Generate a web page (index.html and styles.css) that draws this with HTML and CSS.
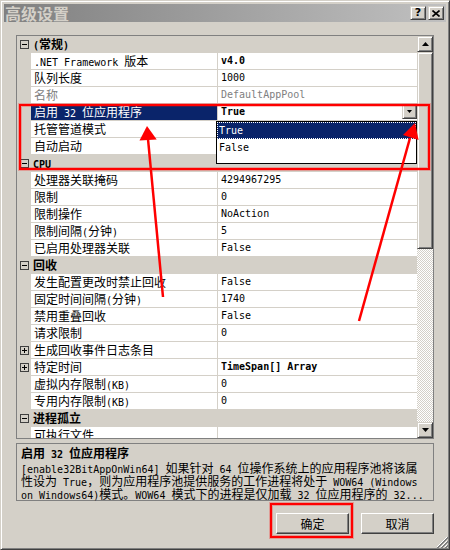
FILE: index.html
```html
<!DOCTYPE html>
<html lang="zh-CN">
  <head>
    <meta charset="UTF-8" />
    <title>高级设置</title>
    <link rel="stylesheet" href="styles.css">
  </head>
  <body>
    <div class="window">
      <div class="titlebar">
        <span class="title">高级设置</span>
        <div class="caption-btns">
          <span class="cbtn help">?</span>
          <span class="cbtn">
            <svg width="8" height="7" viewBox="0 0 8 7"><path d="M0.5 0.5 L7.5 6.5 M7.5 0.5 L0.5 6.5" stroke="#000" stroke-width="1.6" fill="none"/></svg>
          </span>
        </div>
      </div>

      <div class="content">
        <div class="grid">
          <div class="rows">
            <div class="cat"><span class="gutter"><i class="tog"></i></span><span class="label"><span class="m">(</span>常规<span class="m">)</span></span></div>
            <div class="row"><span class="gutter"></span><span class="name"><span class="m">.NET Framework </span>版本</span><span class="val b">v4.0</span></div>
            <div class="row"><span class="gutter"></span><span class="name">队列长度</span><span class="val">1000</span></div>
            <div class="row off"><span class="gutter"></span><span class="name">名称</span><span class="val">DefaultAppPool</span></div>
            <div class="row sel"><span class="gutter"></span><span class="name">启用<span class="m"> 32 </span>位应用程序</span><span class="val b edit">True<span class="ddbtn"><svg width="5" height="3" viewBox="0 0 5 3"><path d="M0 0 H5 L2.5 3 Z" fill="#000"/></svg></span></span></div>
            <div class="row"><span class="gutter"></span><span class="name">托管管道模式</span><span class="val"></span></div>
            <div class="row"><span class="gutter"></span><span class="name">自动启动</span><span class="val"></span></div>
            <div class="cat"><span class="gutter"><i class="tog"></i></span><span class="label"><span class="m">CPU</span></span></div>
            <div class="row"><span class="gutter"></span><span class="name">处理器关联掩码</span><span class="val">4294967295</span></div>
            <div class="row"><span class="gutter"></span><span class="name">限制</span><span class="val">0</span></div>
            <div class="row"><span class="gutter"></span><span class="name">限制操作</span><span class="val">NoAction</span></div>
            <div class="row"><span class="gutter"></span><span class="name">限制间隔<span class="m">(</span>分钟<span class="m">)</span></span><span class="val">5</span></div>
            <div class="row"><span class="gutter"></span><span class="name">已启用处理器关联</span><span class="val">False</span></div>
            <div class="cat"><span class="gutter"><i class="tog"></i></span><span class="label">回收</span></div>
            <div class="row"><span class="gutter"></span><span class="name">发生配置更改时禁止回收</span><span class="val">False</span></div>
            <div class="row"><span class="gutter"></span><span class="name">固定时间间隔<span class="m">(</span>分钟<span class="m">)</span></span><span class="val">1740</span></div>
            <div class="row"><span class="gutter"></span><span class="name">禁用重叠回收</span><span class="val">False</span></div>
            <div class="row"><span class="gutter"></span><span class="name">请求限制</span><span class="val">0</span></div>
            <div class="row"><span class="gutter"><i class="tog plus"></i></span><span class="name">生成回收事件日志条目</span><span class="val"></span></div>
            <div class="row"><span class="gutter"><i class="tog plus"></i></span><span class="name">特定时间</span><span class="val b">TimeSpan[] Array</span></div>
            <div class="row"><span class="gutter"></span><span class="name">虚拟内存限制<span class="m">(KB)</span></span><span class="val">0</span></div>
            <div class="row"><span class="gutter"></span><span class="name">专用内存限制<span class="m">(KB)</span></span><span class="val">0</span></div>
            <div class="cat"><span class="gutter"><i class="tog"></i></span><span class="label">进程孤立</span></div>
            <div class="row"><span class="gutter"></span><span class="name">可执行文件</span><span class="val"></span></div>
          </div>

          <div class="scrollbar">
            <span class="sb-btn"><svg width="7" height="4" viewBox="0 0 7 4"><path d="M0 4 H7 L3.5 0 Z" fill="#000"/></svg></span>
            <span class="thumb"></span>
            <span class="track"></span>
            <span class="sb-btn"><svg width="7" height="4" viewBox="0 0 7 4"><path d="M0 0 H7 L3.5 4 Z" fill="#000"/></svg></span>
          </div>

          <div class="dropdown">
            <div class="hi">True</div>
            <div>False</div>
          </div>
        </div>

        <div class="desc">
          <h4>启用<span class="m"> 32 </span>位应用程序</h4>
          <p><span class="m">[enable32BitAppOnWin64] </span>如果针对<span class="m"> 64 </span>位操作系统上的应用程序池将该属</p>
          <p>性设为<span class="m"> True</span>，则为应用程序池提供服务的工作进程将处于<span class="m"> WOW64 (Windows</span></p>
          <p><span class="m">on Windows64)</span>模式。<span class="m">WOW64 </span>模式下的进程是仅加载<span class="m"> 32 </span>位应用程序的<span class="m"> 32...</span></p>
        </div>

        <div class="actions">
          <button class="btn">确定</button>
          <button class="btn">取消</button>
        </div>
      </div>

      <svg class="grip" width="12" height="12" viewBox="0 0 12 12">
        <path d="M11 1 L1 11 M11 5 L5 11 M11 9 L9 11" stroke="#fff" stroke-width="1" fill="none"/>
        <path d="M12 1 L1 12 M12 2 L2 12 M12 5 L5 12 M12 6 L6 12 M12 9 L9 12 M12 10 L10 12" stroke="#808080" stroke-width="1" fill="none"/>
      </svg>

      <!-- red annotations drawn over the dialog -->
      <svg class="marks" width="450" height="550" viewBox="0 0 450 550">
        <g fill="none" stroke="#ff0000">
          <rect x="20" y="105" width="409" height="64" stroke-width="2" />
          <rect x="20" y="105" width="409" height="64" stroke-width="4" stroke-opacity="0.25" />
          <rect x="271" y="504" width="81" height="33" stroke-width="2" />
          <rect x="271" y="504" width="81" height="33" stroke-width="4" stroke-opacity="0.25" />
          <line x1="163" y1="297" x2="148" y2="139" stroke-width="2.5" />
          <line x1="359" y1="321" x2="410" y2="138" stroke-width="2.5" />
        </g>
        <g fill="#ff0000">
          <polygon points="147,126 156.7,139.5 139.5,140.5" />
          <polygon points="415,123 418.6,140 403,135" />
        </g>
      </svg>
    </div>
  </body>
</html>
```

FILE: styles.css
```css
* {
  box-sizing: border-box;
}

body {
  margin: 0;
  background: #d4d0c8;
  font: 12px/16px "Noto Sans CJK SC", sans-serif;
  color: #000;
}

.m {
  font-family: "DejaVu Sans Mono", monospace;
  font-size: 10px;
  line-height: 10px;
}

.window {
  position: relative;
  width: 450px;
  height: 550px;
  display: flex;
  flex-direction: column;
  padding: 3px;
  background: #d4d0c8;
  border: 1px solid;
  border-color: #d4d0c8 #404040 #404040 #d4d0c8;
  box-shadow: inset 1px 1px #fff, inset -1px -1px #808080;
}

/* title bar */
.titlebar {
  height: 18px;
  display: flex;
  align-items: center;
  justify-content: space-between;
  padding: 0 2px 0 1px;
  background: linear-gradient(to right, #808080, #c0c0c0);
}

.title {
  color: #d4d0c8;
  font-size: 16px;
  font-weight: bold;
  line-height: 18px;
}

.caption-btns {
  display: flex;
  gap: 2px;
}

.cbtn {
  width: 16px;
  height: 14px;
  display: flex;
  align-items: center;
  justify-content: center;
  background: #d4d0c8;
  border: 1px solid;
  border-color: #d4d0c8 #404040 #404040 #d4d0c8;
  box-shadow: inset 1px 1px #fff, inset -1px -1px #808080;
}

.help {
  font: bold 11px/12px "DejaVu Sans", sans-serif;
}

.content {
  padding: 13px 12px 0;
}

/* property grid */
.grid {
  position: relative;
  display: flex;
  height: 404px;
  border: 1px solid #808080;
  background: #fff;
}

.rows {
  width: 400px;
  overflow: hidden;
}

.row,
.cat {
  display: grid;
  grid-template-columns: 14px 187px 199px;
  height: 17px;
  white-space: nowrap;
}

.gutter {
  background: #d4d0c8;
}

.cat {
  background: #d4d0c8;
  font-weight: bold;
}

.cat .label {
  grid-column: 2 / 4;
  padding-left: 2px;
}

.row .name {
  padding-left: 3px;
  background: #fff;
  border-right: 1px solid #d4d0c8;
  border-bottom: 1px solid #d4d0c8;
}

.row .val {
  padding-left: 3px;
  background: #fff;
  border-bottom: 1px solid #d4d0c8;
  font: 10px/16px "DejaVu Sans Mono", monospace;
}

.val.b {
  font-weight: bold;
}

.off .name,
.off .val {
  color: #808080;
}

.sel .name {
  background: #0a246a;
  color: #fff;
}

.val.edit {
  display: flex;
  justify-content: space-between;
}

.ddbtn {
  width: 15px;
  height: 15px;
  display: flex;
  align-items: center;
  justify-content: center;
  background: #d4d0c8;
  border: 1px solid;
  border-color: #d4d0c8 #404040 #404040 #d4d0c8;
  box-shadow: inset 1px 1px #fff, inset -1px -1px #808080;
}

.tog {
  position: relative;
  display: block;
  width: 9px;
  height: 9px;
  margin: 4px 0 0 3px;
  border: 1px solid #404040;
}

.tog::before {
  content: "";
  position: absolute;
  left: 1px;
  top: 3px;
  width: 5px;
  height: 1px;
  background: #000;
}

.tog.plus::after {
  content: "";
  position: absolute;
  left: 3px;
  top: 1px;
  width: 1px;
  height: 5px;
  background: #000;
}

.dropdown {
  position: absolute;
  left: 199px;
  top: 85px;
  width: 201px;
  height: 43px;
  background: #fff;
  border: 1px solid #000;
  font: 10px/17px "DejaVu Sans Mono", monospace;
}

.dropdown div {
  height: 17px;
  padding-left: 2px;
}

.dropdown .hi {
  background: #0a246a;
  color: #fff;
  outline: 1px dotted #fff;
  outline-offset: -1px;
}

/* scrollbar */
.scrollbar {
  width: 16px;
  display: flex;
  flex-direction: column;
}

.sb-btn,
.thumb {
  background: #d4d0c8;
  border: 1px solid;
  border-color: #d4d0c8 #404040 #404040 #d4d0c8;
  box-shadow: inset 1px 1px #fff, inset -1px -1px #808080;
}

.sb-btn {
  height: 16px;
  display: flex;
  align-items: center;
  justify-content: center;
}

.thumb {
  height: 197px;
}

.track {
  flex: 1;
  background: repeating-conic-gradient(#fff 0 25%, #d4d0c8 0 50%) 0 0 / 2px 2px;
}

/* description pane */
.desc {
  height: 58px;
  margin-top: 4px;
  padding: 2px 4px 0;
  border: 1px solid #808080;
}

.desc h4 {
  margin: 0 0 1px;
  font-size: 12px;
  line-height: 14px;
  font-weight: bold;
}

.desc p {
  height: 13px;
  margin: 0;
  line-height: 13px;
  white-space: nowrap;
}

/* buttons */
.actions {
  display: flex;
  justify-content: flex-end;
  gap: 12px;
  margin-top: 12px;
}

.btn {
  width: 73px;
  height: 21px;
  padding: 0;
  font: 12px/17px "Noto Sans CJK SC", sans-serif;
  color: #000;
  background: #d4d0c8;
  border: 1px solid;
  border-color: #fff #404040 #404040 #fff;
  box-shadow: inset -1px -1px #808080;
}

.grip {
  position: absolute;
  right: 1px;
  bottom: 1px;
}

.marks {
  position: absolute;
  left: -1px;
  top: -1px;
  pointer-events: none;
}
```
